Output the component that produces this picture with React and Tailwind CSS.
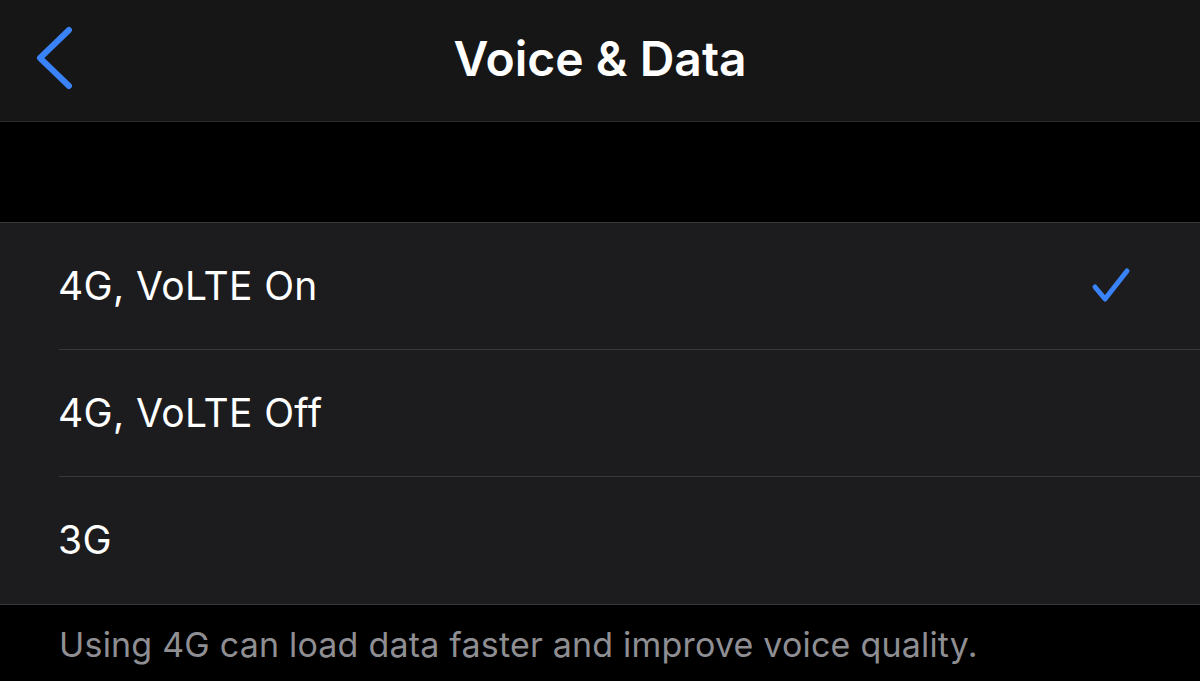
export default function App() {
  const options = [
    { label: '4G, VoLTE On', checked: true },
    { label: '4G, VoLTE Off', checked: false },
    { label: '3G', checked: false },
  ]

  return (
    <div className="w-[1200px] h-[681px] bg-black overflow-hidden font-['Inter','Liberation_Sans',sans-serif] antialiased">
      {/* nav bar */}
      <div className="relative h-[122px] bg-[#161616] border-b border-[#2a2a2c] flex items-center justify-center">
        <button className="absolute left-[34px] top-[26px] p-0 bg-transparent border-0">
          <svg width="42" height="64" viewBox="0 0 42 64" fill="none">
            <path d="M35 4 L6 32 L35 60" stroke="#3a82f7" strokeWidth="6" strokeLinecap="round" strokeLinejoin="round" />
          </svg>
        </button>
        <h1 className="text-white text-[48px] font-semibold tracking-[0px] -mt-[4px]">Voice &amp; Data</h1>
      </div>

      <div className="h-[100px] bg-black" />

      {/* options */}
      <div className="bg-[#1c1c1e] border-t border-b border-[#38383a]">
        {options.map((o, i) => (
          <div key={o.label} className="pl-[59px]">
            <div className={`h-[127px] flex items-center pr-[68px] ${i < options.length - 1 ? 'border-b border-[#38383a]' : ''}`}>
              <span className="flex-1 text-white text-[39px] tracking-[0.35px] -ml-[1px]">{o.label}</span>
              {o.checked && (
                <svg width="42" height="40" viewBox="0 0 42 40" fill="none">
                  <path d="M5 21 L15 33 L37 5" stroke="#3a82f7" strokeWidth="5" strokeLinecap="round" strokeLinejoin="round" />
                </svg>
              )}
            </div>
          </div>
        ))}
      </div>

      <p className="pl-[59px] pt-[14px] text-[#8e8e93] text-[34px] tracking-[0.2px]">
        Using 4G can load data faster and improve voice quality.
      </p>
    </div>
  )
}
